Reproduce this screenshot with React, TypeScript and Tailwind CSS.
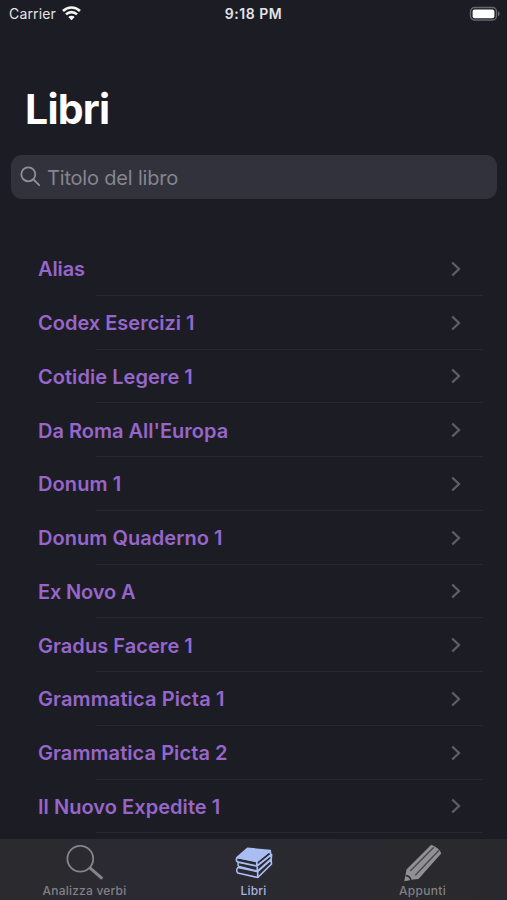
import React from 'react';

interface Book {
  title: string;
  spacing: string;
}

const books: Book[] = [
  { title: 'Alias', spacing: 'tracking-[-0.1px]' },
  { title: 'Codex Esercizi 1', spacing: 'tracking-[0px]' },
  { title: 'Cotidie Legere 1', spacing: 'tracking-[0.05px]' },
  { title: "Da Roma All'Europa", spacing: 'tracking-[0px]' },
  { title: 'Donum 1', spacing: 'tracking-[0.1px]' },
  { title: 'Donum Quaderno 1', spacing: 'tracking-[0.05px]' },
  { title: 'Ex Novo A', spacing: 'tracking-[-0.15px]' },
  { title: 'Gradus Facere 1', spacing: 'tracking-[0.05px]' },
  { title: 'Grammatica Picta 1', spacing: 'tracking-[0.12px]' },
  { title: 'Grammatica Picta 2', spacing: 'tracking-[0.07px]' },
  { title: 'Il Nuovo Expedite 1', spacing: 'tracking-[0.05px]' },
];

function StatusBar() {
  return (
    <div className="grid h-7 grid-cols-3 items-center pl-[9px] pr-1.5 text-[14px] leading-7 text-[#e4e4e8]">
      <div className="flex items-center gap-1.5">
        <span className="tracking-[0.15px]">Carrier</span>
        <svg className="mb-0.5 h-[15px] w-[19px]" viewBox="0 0 19 15" fill="none" stroke="#f4f4f6" strokeWidth="2.6">
          <path d="M1 5C5.8 0.4 13.2 0.4 18 5" />
          <path d="M4 8.4C7.1 5.4 11.9 5.4 15 8.4" />
          <path d="M9.5 14.2L6.3 11C8 9.4 11 9.4 12.7 11Z" fill="#f4f4f6" stroke="none" />
        </svg>
      </div>
      <span className="mr-[3px] text-center font-semibold tracking-[0.55px]">9:18 PM</span>
      <svg className="mb-px h-4 w-8 justify-self-end" viewBox="0 0 32 16">
        <rect x="1.5" y="1.5" width="26" height="12.5" rx="4" fill="none" stroke="#66666c" strokeWidth="1.4" />
        <rect x="3.6" y="3.4" width="21.8" height="8.8" rx="2" fill="#ffffff" />
        <path d="M29 5.3C31.2 6.3 31.2 9.3 29 10.3Z" fill="#66666c" />
      </svg>
    </div>
  );
}

function SearchField() {
  return (
    <div className="ml-[11px] mr-[10px] mt-[22px] flex h-11 items-center rounded-[11px] bg-[#32323c] pl-[9px] pr-3">
      <svg className="mb-0.5 h-[21px] w-[21px] shrink-0" viewBox="0 0 21 21" fill="none" stroke="#90909a" strokeWidth="1.8" strokeLinecap="round">
        <circle cx="8.3" cy="8.3" r="7" />
        <path d="M13.4 13.4L19.2 19.2" />
      </svg>
      <span className="ml-1.5 mt-0.5 text-[20px] tracking-[-0.18px] text-[#85858e]">Titolo del libro</span>
    </div>
  );
}

function BookRow({ title, spacing }: Book) {
  return (
    <li className="relative flex h-[53.75px] items-center justify-between pl-[38px] pr-[45px]">
      <span className={`mt-px whitespace-nowrap text-[20px] font-semibold text-[#9766ca] ${spacing}`}>{title}</span>
      <svg className="h-4 w-3" viewBox="0 0 12 16" fill="none" stroke="#5e5e66" strokeWidth="2.3">
        <path d="M2.2 1.5L9 8L2.2 14.5" />
      </svg>
      <div className="absolute bottom-0 left-[96px] right-[24px] h-px bg-[#282831]" />
    </li>
  );
}

function MagnifierIcon() {
  return (
    <svg className="h-[36px] w-[40px]" viewBox="0 0 40 36" fill="none" stroke="#85858a">
      <circle cx="15.3" cy="14.8" r="12.9" strokeWidth="1.8" />
      <path d="M24.6 23.6L37.3 34.6" strokeWidth="3" />
    </svg>
  );
}

function BooksIcon() {
  return (
    <svg className="h-[36px] w-[40px]" viewBox="0 0 40 36" fill="#29292f" stroke="#a9bdf3" strokeWidth="1.7" strokeLinejoin="round">
      {/* bottom book */}
      <path d="M4 21.5L23.5 25.5L37 13.5L37.5 18L23.8 31.5L3.8 27C2.4 25.5 2.4 23 4 21.5Z" />
      {/* middle book */}
      <path d="M5 15.8L23.2 19.6L37.6 8.5L37.2 13L23.6 25.2L5 20.6C3.8 19.3 3.8 17 5 15.8Z" />
      {/* top book */}
      <path d="M3.4 11.5L22.8 15L36.2 4.7L36.6 9L22.8 20L3.4 15.8C2 14.6 2 12.7 3.4 11.5Z" />
      <path d="M3.2 11.3L13.5 2.3L36.2 4.7L22.8 15.6Z" fill="#a9bdf3" />
      <path d="M22.8 15.5V20M23.3 20.5V25M23.7 26V31" />
    </svg>
  );
}

function PencilIcon() {
  return (
    <svg className="h-[38px] w-[38px]" viewBox="0 0 38 38">
      <path d="M0.3 37.2L2.5 25.5L27 1C30.5 1.4 36.5 5.8 37.2 9.5L14.5 35L9.5 35.4Z" fill="#919195" />
      <path d="M6.2 27L29.8 3.2M11.3 31.3L34.8 6.6" stroke="#4b4b50" strokeWidth="1.5" />
      <path d="M1.7 31.6C3.8 31.8 6.3 33.6 7 36.2" stroke="#2a292e" strokeWidth="1.5" fill="none" />
    </svg>
  );
}

function TabBar() {
  return (
    <nav className="grid h-[61px] shrink-0 grid-cols-3 bg-[#2a292e] bg-linear-to-r from-[#2b2a2d] via-[#2b2a33] via-25% to-[#29292d] text-[12px] font-medium text-[#808086]">
      <div className="flex flex-col items-center pt-[5px]">
        <MagnifierIcon />
        <span className="mt-[3px] leading-4 tracking-[0.2px]">Analizza verbi</span>
      </div>
      <div className="flex flex-col items-center pt-[7px] text-[#a4b4e2]">
        <BooksIcon />
        <span className="mt-px leading-4 tracking-[0.2px]">Libri</span>
      </div>
      <div className="flex flex-col items-center pt-[5px]">
        <PencilIcon />
        <span className="mt-px leading-4 tracking-[0.3px]">Appunti</span>
      </div>
    </nav>
  );
}

export default function App() {
  return (
    <div className="flex h-[900px] w-[507px] flex-col overflow-hidden bg-[#1c1c24] font-['Inter',sans-serif]">
      <StatusBar />
      <h1 className="ml-[25px] mt-[57px] text-[41px] font-bold leading-[48px] tracking-[-0.8px] text-white">Libri</h1>
      <SearchField />
      <ul className="mt-[43px] min-h-0 flex-1 overflow-hidden">
        {books.map((book) => (
          <BookRow key={book.title} title={book.title} spacing={book.spacing} />
        ))}
      </ul>
      <TabBar />
    </div>
  );
}
